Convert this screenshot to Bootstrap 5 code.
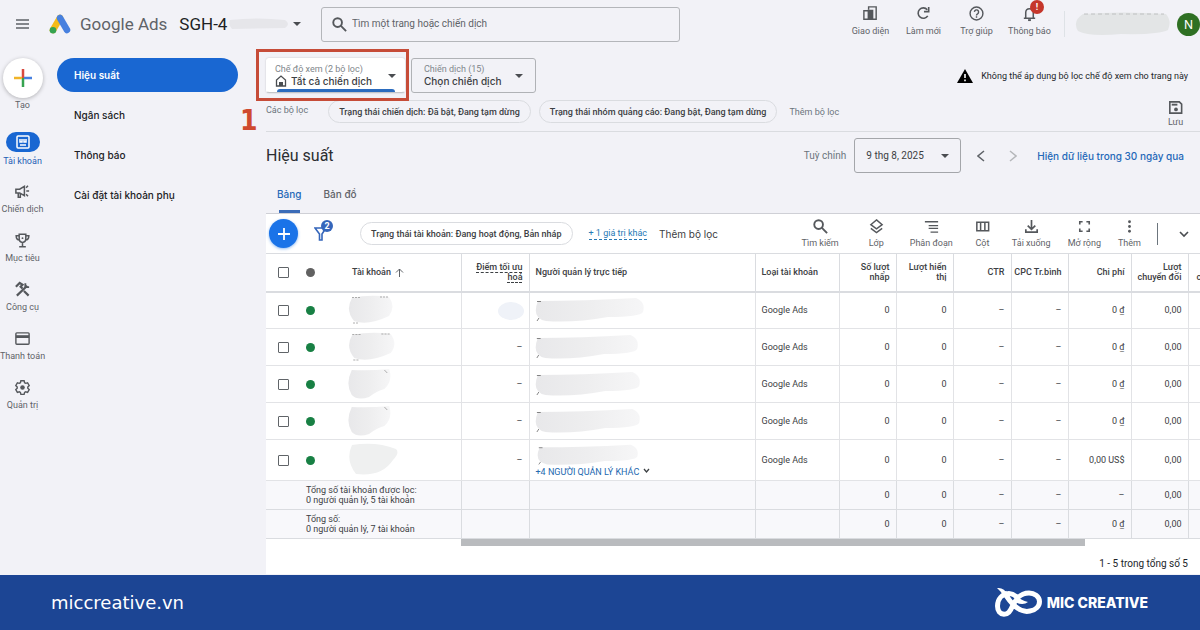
<!DOCTYPE html>
<html lang="vi">
<head>
<meta charset="utf-8">
<meta name="viewport" content="width=device-width, initial-scale=1">
<title>Google Ads - Hiệu suất</title>
<link href="https://cdn.jsdelivr.net/npm/bootstrap@5.3.0/dist/css/bootstrap.min.css" rel="stylesheet">
<style>
:root{--ink:#3c4043;--muted:#5f6368;--blue:#1967d2;--line:#dadce0;--page:#f2f2f7}
body{font:400 9px/12px Roboto,sans-serif;background:var(--page);color:var(--ink)}
svg{display:block;flex:none}
button{font:inherit;color:inherit;background:none;border:0;padding:0}
a{text-decoration:none;color:inherit}
.inter{font-family:Inter,sans-serif}
.t10{font-size:10px}
.ico{width:17px;height:17px;fill:none;stroke:#55585c;stroke-width:2}
.top-bar{height:48px}
.brand-name{font-size:17px;line-height:24px;color:var(--muted)}
.acct{font-size:17px;line-height:24px;color:#202124}
.brand-box{width:321px;padding-left:15px}
.search-box{width:359px;height:35px;border:1px solid #b4b6ba;border-radius:3px;padding:0 9px}
.search-box input{font-size:10px;color:var(--muted);outline:0;min-width:0}
.search-box input::placeholder{color:var(--muted);opacity:1}
.tool{display:flex;flex-direction:column;align-items:center;color:var(--muted);white-space:nowrap;position:relative}
.top-tools .tool{width:53px;gap:3px;padding-bottom:6px}
.alert-dot{left:27px;top:-5px;width:14px;height:14px;border-radius:50%;background:#c5362b;color:#fff;font-weight:700;line-height:14px}
.avatar{width:23px;height:23px;background:#2f7023;color:#fff;font-size:12px;line-height:23px}
.rail{width:45px;padding-top:6px}
.rail a{display:flex;flex-direction:column;align-items:center;justify-content:center;gap:3px;height:49px;white-space:nowrap;color:var(--muted)}
.rail a.make{height:auto;gap:1px;padding-top:4px;margin-bottom:14px}
.rail a.on{color:#1f5fb5}
.rail-pill{width:34px;height:20px;border-radius:10px;background:var(--blue)}
.create{width:40px;height:40px;background:#fff;box-shadow:0 1px 4px #0004}
.side{width:181px;margin-left:12px;padding-top:10px}
.side a{display:flex;align-items:center;height:34px;margin-bottom:6px;padding-left:17px;border-radius:17px;color:#202124;font:500 10px/14px Inter,sans-serif}
.side a.on{background:var(--blue);color:#fff;font-weight:600}
.main{margin-left:28px;padding-top:10px;min-width:0}
.picker{height:35px;border:1px solid #b0b2b6;border-radius:3px;line-height:11px}
.picker select{appearance:none;border:0;background:none;padding:0;font:500 10px/12px Inter,sans-serif;color:var(--ink);height:12px;outline:0}
.picker label{color:#80868b;display:block}
.picker.on{width:139px;background:#fff;border-color:#fff #fff #c4c6ca;box-shadow:0 0 2px #0003}
.picker.on::after{content:"";position:absolute;left:10px;right:9px;bottom:0;height:3px;background:#2b6cbf;border-radius:3px 3px 0 0}
.picker.camp{width:125px;margin-left:6px}
.mark-box{left:-10px;top:-9px;width:153px;height:52px;border:3px solid #c64c38}
.mark-num{left:-26px;top:45px;font:700 28px/36px "DejaVu Sans Condensed","DejaVu Sans",sans-serif;color:#cf4a2e}
.chip{height:23px;border:1px solid var(--line);border-radius:12px;padding:0 10px;font-weight:500;white-space:nowrap}
.filters{height:39px;border-bottom:1px solid var(--line);padding-bottom:1px;gap:8px}
.dates{gap:16px;padding:6px 16px 2px 0}
.date-pick{width:107px;height:35px;border:1px solid #a4a6aa;border-radius:3px;padding:0 11px}
.date-pick select{appearance:none;border:0;background:none;padding:0;font-size:10px;color:var(--ink);outline:0}
.h-title{font-size:16px;line-height:24px;color:#2b2d30}
.tabs a{padding:0 11px 9px;line-height:14px;border-bottom:3px solid transparent;position:relative;color:var(--muted)}
.tabs a.on{color:#2468b8}
.tabs a.on::after{content:"";position:absolute;left:13px;right:12px;bottom:-3px;height:3px;background:#3b6cb8}
.sheet{background:#fff;border-top:1px solid #cfd0d6}
.t-bar{height:39px;padding-right:10px}
.fab{width:29px;height:29px;margin-left:3px;background:#1a73e8;box-shadow:0 1px 3px #1a73e880}
.count{left:7px;top:-6px;width:12px;height:12px;line-height:12px;background:#3566bb;color:#fff;font-weight:700}
.dash-link{color:#2779b5;border-bottom:1px dashed #2779b5}
.t-bar .tool{gap:2px}
.acts{gap:17px}
.grid-t{width:100%;table-layout:fixed;border-collapse:collapse;line-height:10px}
.grid-t th{height:38px;font-weight:500;border:solid var(--line);border-width:1px 0 2px 1px;padding:0 5px 0 6px;vertical-align:middle}
.grid-t td{height:37px;border:solid #e2e3e6;border-width:0 0 1px 1px;padding:0 5px 0 6px;vertical-align:middle}
.grid-t .nb{border-left:0}
.grid-t .tall td{height:41px}
.grid-t .n{text-align:right;padding-right:6px}
.grid-t tfoot td{height:29px;background:#f8f8fb;border-color:var(--line)}
.grid-t .dots{text-decoration:underline dashed;text-underline-offset:2px}
.grid-t input{appearance:none;display:block;width:11px;height:11px;border:1px solid #606468;border-radius:1px;margin:0 0 0 6px}
.dot{display:block;width:9px;height:9px;border-radius:50%;background:#188044}
.scroll-x{height:7px;margin-left:195px;width:calc(100% - 310px);background:#b9bbbe}
.foot{height:55px;background:#1c4594;color:#fff;padding:0 52px 0 51px}
.site{font:400 18px/24px "DejaVu Sans",sans-serif}
.mic{font:800 14px/20px Inter,sans-serif}
</style>
</head>
<body class="min-vh-100 d-flex flex-column overflow-x-hidden">
<svg width="0" height="0" class="position-absolute" aria-hidden="true">
<defs>
<linearGradient id="g"><stop offset="0" stop-color="#e8e8ea"/><stop offset=".5" stop-color="#eeeeef"/><stop offset="1" stop-color="#f6f6f7"/></linearGradient>
<symbol id="caret" viewBox="0 0 8 4"><path d="M0 0h8L4 4z" fill="#4a4d51"/></symbol>
<symbol id="find" viewBox="0 0 18 18"><circle cx="7" cy="7" r="4.6"/><path d="M10.5 10.5 16 16"/></symbol>
<symbol id="blobA" viewBox="0 0 50 34" preserveAspectRatio="none"><path d="M6 5Q24 1 43 4Q50 14 43 23Q22 33 8 28Q-1 17 6 5Z" fill="url(#g)"/><path d="M6 4.500h8M34 4h8M7 30h6" stroke="#999" stroke-dasharray="2 1" stroke-width=".8"/></symbol>
<symbol id="blobA2" viewBox="0 0 50 34" preserveAspectRatio="none"><path d="M6 3Q24 4 45 2Q49 14 40 22Q32 24 24 30Q12 34 6 28Q-1 17 6 3Z" fill="url(#g)"/><path d="M40 3l3 3" stroke="#999" stroke-width=".8"/></symbol>
<symbol id="blobB" viewBox="0 0 112 28" preserveAspectRatio="none"><path d="M4 5Q50 5 102 2Q112 6 109 16Q106 21 74 21Q40 27 12 25Q-3 22 4 5Z" fill="url(#g)"/><path d="M3 5.500h4M3 25l2-3" stroke="#666" stroke-width=".8"/></symbol>
</defs>
</svg>

<header class="top-bar d-flex align-items-center">
  <div class="brand-box d-flex align-items-center flex-shrink-0">
    <button aria-label="Menu"><svg width="14" height="12" stroke="#5f6368" stroke-width="1.500"><path d="M1 2h13M1 6h13M1 10h13"/></svg></button>
    <svg class="ms-3 me-2 ps-1" width="27" height="22" viewBox="0 0 23 22"><path d="M11 5 4 17" stroke="#f5bb17" stroke-width="6.500" stroke-linecap="round"/><path d="M11 5l7 12" stroke="#4780df" stroke-width="6.500" stroke-linecap="round"/><circle cx="4" cy="17.300" r="3.300" fill="#36a350"/></svg>
    <span class="brand-name">Google Ads</span>
    <span class="acct ms-2 ps-1">SGH-4</span>
    <svg class="me-1" width="62" height="16"><path d="M3 4Q30 1 58 4Q64 8 58 12L5 13Q1 9 3 4Z" fill="#e6e6ea"/></svg>
    <svg width="8" height="4"><use href="#caret"/></svg>
  </div>
  <label class="search-box d-flex align-items-center gap-1">
    <svg class="ico"><use href="#find"/></svg>
    <input class="border-0 bg-transparent flex-grow-1 p-0" type="text" aria-label="Tìm kiếm" placeholder="Tìm một trang hoặc chiến dịch">
  </label>
  <div class="top-tools d-flex ms-auto align-items-center">
    <button class="tool"><svg class="ico" viewBox="0 0 18 18"><path d="M7 5V2h8v13H2V6h5v9" stroke-width="1.500"/><path d="M7 6h4v9H7z" fill="#55585c"/></svg>Giao diện</button>
    <button class="tool"><svg class="ico" viewBox="0 0 18 18"><path d="M13.500 11.500A5.500 5.500 0 1 1 13 5M14.500 2v5h-5" stroke-width="1.700"/></svg>Làm mới</button>
    <button class="tool"><svg class="ico" viewBox="0 0 18 18"><circle cx="9" cy="9" r="6.800" stroke-width="1.500"/><path d="M6.800 7.300a2.200 2.200 0 1 1 3.300 2q-1.100.6-1.100 1.700M9 12v1.600" stroke-width="1.500"/></svg>Trợ giúp</button>
    <button class="tool"><svg class="ico" viewBox="0 0 18 18"><path d="M3 14h12M5 14V8q0-4 4-4t4 4v6" stroke-width="1.600"/><path d="M7.500 16h3" stroke-width="2"/></svg>Thông báo<span class="alert-dot position-absolute text-center">!</span></button>
    <div class="border-start ms-2 ps-2 d-flex align-items-center">
      <svg width="100" height="26"><path d="M10 3Q50 0 93 3Q99 10 95 19Q85 24 48 23Q16 26 5 20Q-1 10 10 3Z" fill="#e3e5e6"/><path d="M11 3h80" stroke="#b5b7b8" stroke-dasharray="4 3" stroke-width=".8"/></svg>
      <span class="avatar inter rounded-circle text-center ms-1">N</span>
    </div>
  </div>
</header>

<div class="d-flex flex-grow-1">
  <nav class="rail flex-shrink-0">
    <a href="#" class="make"><span class="create rounded-circle d-flex align-items-center justify-content-center"><svg width="18" height="18" stroke-width="2.500"><path d="M9 0v9" stroke="#d84a3f"/><path d="M9 9v9" stroke="#36a350"/><path d="M0 9h8" stroke="#f0b429"/><path d="M10 9h8" stroke="#4780df"/></svg></span>Tạo</a>
    <a href="#" class="on"><span class="rail-pill d-flex align-items-center justify-content-center"><svg width="14" height="14" fill="none" stroke="#fff" stroke-width="1.500"><rect x="1" y="1" width="12" height="12" rx="1"/><path d="M4 4v3h2V4M8 4v3h2V4M4 10h6"/></svg></span>Tài khoản</a>
    <a href="#"><svg class="ico" viewBox="0 0 18 18"><path d="M2 6.500h4l5-3v10l-5-3H2zM4.500 11v4h2.200v-4M13 8.500h3M12.800 5l2-2M12.800 12l2 2" stroke-width="1.600"/></svg>Chiến dịch</a>
    <a href="#"><svg class="ico" viewBox="0 0 18 18"><path d="M5.500 2.500h7V7q0 4-3.500 4T5.500 7zM5.500 4H2.300q0 4.500 3.500 4.500M12.500 4h3.200q0 4.500-3.500 4.500M9 11v4M5.500 15.500h7" stroke-width="1.600"/><circle cx="9" cy="6.500" r="1" fill="#55585c" stroke="none"/></svg>Mục tiêu</a>
    <a href="#"><svg class="ico" viewBox="0 0 18 18"><path d="M3 15.500 14 5M10.500 10.500l5 5M2 6l4-4 3 2-2 2 2 2" stroke-width="2.300"/><path d="M12 2.500v4h4" stroke-width="2"/></svg>Công cụ</a>
    <a href="#"><svg class="ico" viewBox="0 0 18 18"><rect x="2" y="3" width="14" height="12" rx="1" stroke-width="1.500"/><path d="M2 7h14" stroke-width="3"/></svg>Thanh toán</a>
    <a href="#"><svg class="ico" viewBox="0 0 18 18"><path d="M7.300 1.800h3.400l.5 2.100 1.200.7 2-.6 1.700 2.900-1.500 1.500v1.300l1.500 1.500-1.700 2.900-2-.6-1.200.7-.5 2.100H7.300l-.5-2.100-1.200-.7-2 .6-1.700-2.900 1.500-1.500V8.400L1.900 6.900 3.600 4l2 .6 1.200-.7z" stroke-width="1.500"/><circle cx="9" cy="9" r="2.400" fill="#55585c" stroke="none"/></svg>Quản trị</a>
  </nav>

  <nav class="side flex-shrink-0">
    <a href="#" class="on">Hiệu suất</a>
    <a href="#">Ngân sách</a>
    <a href="#">Thông báo</a>
    <a href="#">Cài đặt tài khoản phụ</a>
  </nav>

  <main class="main flex-grow-1">
    <div class="d-flex align-items-center">
      <div class="position-relative">
        <div class="picker on position-relative d-flex align-items-center justify-content-between ps-2 pe-2">
          <div><label for="view">Chế độ xem (2 bộ lọc)</label>
            <div class="d-flex gap-1"><svg width="12" height="12" fill="none" stroke="#4a4d51" stroke-width="1.300"><path d="M1.500 11V5L6 1l4.500 4v6z"/><path d="M4 7h4v4H4z" fill="#4a4d51" stroke="none"/></svg>
            <select id="view"><option>Tất cả chiến dịch</option></select></div></div>
          <svg width="8" height="4"><use href="#caret"/></svg>
        </div>
        <div class="mark-box position-absolute"></div>
        <span class="mark-num position-absolute">1</span>
      </div>
      <div class="picker camp d-flex align-items-center justify-content-between px-2">
        <div class="ms-1"><label for="camp">Chiến dịch (15)</label><select id="camp" class="d-block"><option>Chọn chiến dịch</option></select></div>
        <svg class="me-1" width="8" height="4"><use href="#caret"/></svg>
      </div>
      <div class="ms-auto d-flex align-items-center gap-2 pe-2 me-1 text-dark"><svg width="16" height="14"><path d="M8 0l8 14H0z"/><path d="M8 5v4M8 10.500v1.800" stroke="#fff" stroke-width="1.600"/></svg>Không thể áp dụng bộ lọc chế độ xem cho trang này</div>
    </div>

    <div class="filters d-flex align-items-center">
      <span class="text-secondary me-2 pe-1 pb-1">Các bộ lọc</span>
      <button class="chip">Trạng thái chiến dịch: Đã bật, Đang tạm dừng</button>
      <button class="chip">Trạng thái nhóm quảng cáo: Đang bật, Đang tạm dừng</button>
      <a href="#" class="text-secondary ms-1">Thêm bộ lọc</a>
      <button class="tool ms-auto me-3 pt-1"><svg class="ico" viewBox="0 0 18 18"><path d="M3 3h10l2.500 2.500V15H3z" stroke-width="1.700"/><path d="M5 6h6" stroke-width="2"/><circle cx="9.500" cy="11" r="2" fill="#55585c" stroke="none"/></svg>Lưu</button>
    </div>

    <div class="dates d-flex align-items-center">
      <h1 class="h-title mb-0 fw-normal">Hiệu suất</h1>
      <div class="ms-auto d-flex align-items-center gap-2"><label for="day" class="t10 text-secondary">Tuỳ chỉnh</label>
      <div class="date-pick d-flex align-items-center justify-content-between"><select id="day"><option>9 thg 8, 2025</option></select><svg width="8" height="4"><use href="#caret"/></svg></div></div>
      <button aria-label="Trước" class="me-2"><svg width="8" height="12" fill="none" stroke="#5f6368" stroke-width="1.500"><path d="M7 1 1 6l6 5"/></svg></button>
      <button aria-label="Sau" class="me-1"><svg width="8" height="12" fill="none" stroke="#b5b7ba" stroke-width="1.500"><path d="m1 1 6 5-6 5"/></svg></button>
      <a href="#" class="inter fw-medium t10" style="color:#2468b8">Hiện dữ liệu trong 30 ngày qua</a>
    </div>

    <div class="tabs d-flex inter fw-medium t10 mt-2 pt-1">
      <a href="#" class="on">Bảng</a><a href="#">Bản đồ</a>
    </div>

    <section class="sheet">
      <div class="t-bar d-flex align-items-center">
        <button class="fab rounded-circle me-3 d-flex align-items-center justify-content-center" aria-label="Thêm"><svg width="12" height="12" stroke="#fff" stroke-width="1.800"><path d="M6 0v12M0 6h12"/></svg></button>
        <button class="position-relative me-4" aria-label="Bộ lọc"><svg width="14" height="15" fill="none" stroke="#3566bb" stroke-width="1.600"><path d="M1 2h11L8 8v6H5.500V8z"/></svg><span class="count rounded-circle position-absolute text-center">2</span></button>
        <button class="chip ms-2">Trạng thái tài khoản: Đang hoạt động, Bản nháp</button>
        <a href="#" class="dash-link ms-3 me-1">+ 1 giá trị khác</a>
        <a href="#" class="inter t10 ms-2">Thêm bộ lọc</a>
        <div class="acts d-flex ms-auto">
          <button class="tool"><svg class="ico"><use href="#find"/></svg>Tìm kiếm</button>
          <button class="tool mx-2 ps-1"><svg class="ico" viewBox="0 0 18 18"><path d="m9 2 6 5-6 4.500L3 7zM3 11l6 4.500 6-4.500" stroke-width="1.500"/></svg>Lớp</button>
          <button class="tool"><svg class="ico" viewBox="0 0 18 18"><path d="M2 4h14M6 8h10M6 11h10M8 15h8" stroke-width="1.400"/></svg>Phân đoạn</button>
          <button class="tool mx-1"><svg class="ico" viewBox="0 0 18 18"><path d="M3 4.500h12.500v9H3zM7 4v10M11.500 4v10" stroke-width="1.600"/></svg>Cột</button>
          <button class="tool"><svg class="ico" viewBox="0 0 18 18"><path d="M9 2v9M5 8l4 4 4-4M3 12v3h12v-3" stroke-width="1.800"/></svg>Tải xuống</button>
          <button class="tool"><svg class="ico" viewBox="0 0 18 18"><path d="M4 7V4h3M11 4h3v3M14 11v3h-3M7 14H4v-3" stroke-width="1.700"/></svg>Mở rộng</button>
          <button class="tool"><svg class="ico" viewBox="0 0 18 18"><g fill="#55585c" stroke="none"><circle cx="9" cy="4" r="1.500"/><circle cx="9" cy="9" r="1.500"/><circle cx="9" cy="14" r="1.500"/></g></svg>Thêm</button>
        </div>
        <button class="border-start border-secondary ms-3 ps-3 py-1" aria-label="Thu gọn"><svg class="ms-1" width="12" height="14" fill="none" stroke="#4a4d51" stroke-width="1.600"><path d="m2 5 4 4 4-4"/></svg></button>
      </div>

      <table class="grid-t mb-0">
        <colgroup><col style="width:40px"><col style="width:40px"><col style="width:115px"><col style="width:68px"><col><col style="width:84px"><col style="width:57px"><col style="width:57px"><col style="width:58px"><col style="width:57px"><col style="width:63px"><col style="width:57px"><col style="width:12px"></colgroup>
        <thead><tr>
          <th class="nb"><input type="checkbox" aria-label="Chọn tất cả"></th>
          <th class="nb ps-0"><span class="dot" style="background:#616161"></span></th>
          <th class="nb"><span class="d-flex gap-1 align-items-center">Tài khoản <svg width="9" height="9" fill="none" stroke="#5f6368"><path d="M4.500 9V1M1 4.500 4.500 1 8 4.500"/></svg></span></th>
          <th class="n dots">Điểm tối ưu hoá</th><th>Người quản lý trực tiếp</th><th>Loại tài khoản</th>
          <th class="n">Số lượt nhấp</th><th class="n">Lượt hiển thị</th><th class="n">CTR</th><th class="n ps-0 text-nowrap">CPC Tr.bình</th><th class="n">Chi phí</th><th class="n ps-0 text-nowrap">Lượt<br>chuyển đổi</th><th class="n pe-0 ps-2">&nbsp;<br>c</th>
        </tr></thead>
        <tbody>
          <tr><td class="nb"><input type="checkbox" aria-label="Chọn hàng 1"></td><td class="nb ps-0"><span class="dot"></span></td><td class="nb ps-0"><svg width="50" height="34"><use href="#blobA"/></svg></td><td class="n pe-1"><svg class="ms-auto" width="28" height="22"><ellipse cx="14" cy="12" rx="13" ry="9" fill="#eff2f8"/></svg></td><td class="ps-1"><svg width="112" height="28"><use href="#blobB"/></svg></td><td>Google Ads</td><td class="n">0</td><td class="n">0</td><td class="n">–</td><td class="n">–</td><td class="n">0 ₫</td><td class="n">0,00</td><td></td></tr>
          <tr><td class="nb"><input type="checkbox" aria-label="Chọn hàng 2"></td><td class="nb ps-0"><span class="dot"></span></td><td class="nb ps-0"><svg width="52" height="34"><use href="#blobA"/></svg></td><td class="n">–</td><td class="ps-1"><svg width="106" height="28"><use href="#blobB"/></svg></td><td>Google Ads</td><td class="n">0</td><td class="n">0</td><td class="n">–</td><td class="n">–</td><td class="n">0 ₫</td><td class="n">0,00</td><td></td></tr>
          <tr><td class="nb"><input type="checkbox" aria-label="Chọn hàng 3"></td><td class="nb ps-0"><span class="dot"></span></td><td class="nb ps-0"><svg width="48" height="34"><use href="#blobA2"/></svg></td><td class="n">–</td><td class="ps-1"><svg width="108" height="28"><use href="#blobB"/></svg></td><td>Google Ads</td><td class="n">0</td><td class="n">0</td><td class="n">–</td><td class="n">–</td><td class="n">0 ₫</td><td class="n">0,00</td><td></td></tr>
          <tr><td class="nb"><input type="checkbox" aria-label="Chọn hàng 4"></td><td class="nb ps-0"><span class="dot"></span></td><td class="nb ps-0"><svg width="48" height="34"><use href="#blobA2"/></svg></td><td class="n">–</td><td class="ps-1"><svg width="108" height="28"><use href="#blobB"/></svg></td><td>Google Ads</td><td class="n">0</td><td class="n">0</td><td class="n">–</td><td class="n">–</td><td class="n">0 ₫</td><td class="n">0,00</td><td></td></tr>
          <tr class="tall"><td class="nb"><input type="checkbox" aria-label="Chọn hàng 5"></td><td class="nb ps-0"><span class="dot"></span></td><td class="nb ps-0"><svg width="56" height="36"><path d="M6 3Q30-1 50 7Q54 11 47 18Q36 35 10 32Q-1 18 6 3Z" fill="#eff0f0"/></svg></td><td class="n">–</td><td><svg width="104" height="24"><use href="#blobB"/></svg><a href="#" class="d-flex gap-1 text-nowrap" style="color:#2469b0">+4 NGƯỜI QUẢN LÝ KHÁC<svg width="7" height="7" fill="none" stroke="#3c4043" stroke-width="1.300"><path d="m1 2 2.500 3L6 2"/></svg></a></td><td>Google Ads</td><td class="n">0</td><td class="n">0</td><td class="n">–</td><td class="n">–</td><td class="n">0,00 US$</td><td class="n">0,00</td><td></td></tr>
        </tbody>
        <tfoot>
          <tr><td class="nb"></td><td class="nb ps-0" colspan="2">Tổng số tài khoản được lọc:<br>0 người quản lý, 5 tài khoản</td><td></td><td></td><td></td><td class="n">0</td><td class="n">0</td><td class="n">–</td><td class="n">–</td><td class="n">–</td><td class="n">0,00</td><td></td></tr>
          <tr><td class="nb"></td><td class="nb ps-0" colspan="2">Tổng số:<br>0 người quản lý, 7 tài khoản</td><td></td><td></td><td></td><td class="n">0</td><td class="n">0</td><td class="n">–</td><td class="n">–</td><td class="n">0 ₫</td><td class="n">0,00</td><td></td></tr>
        </tfoot>
      </table>
      <div class="scroll-x"></div>
      <div class="text-end t10 text-dark pe-2 pt-2 me-1 mt-1 pb-1">1 - 5 trong tổng số 5</div>
    </section>
  </main>
</div>

<footer class="foot d-flex align-items-center justify-content-between">
  <a href="#" class="site">miccreative.vn</a>
  <div class="d-flex align-items-center gap-1"><svg width="48" height="32" fill="none" stroke="#fff" stroke-width="5"><path d="M9 5C13 12 16 16 21 20 26 24 31 25 35 24 41 23 44.500 19 44.500 14.500 44.500 9 39 6 34 6 25 6 21 12 18 18 15 25 13 27.300 9 27.300 5 27 2.500 24 2.500 19 2.500 12 7 7 14 6.500 19 6.500 22 10 24 12"/><path d="M2 1Q9 0 13 8L8 9Q6 4 2 1ZM20 7Q25 13 33 15Q28 19 20 15Z" fill="#fff" stroke="none"/></svg><span class="mic">MIC CREATIVE</span></div>
</footer>
<script src="https://cdn.jsdelivr.net/npm/bootstrap@5.3.0/dist/js/bootstrap.bundle.min.js"></script>
</body>
</html>
